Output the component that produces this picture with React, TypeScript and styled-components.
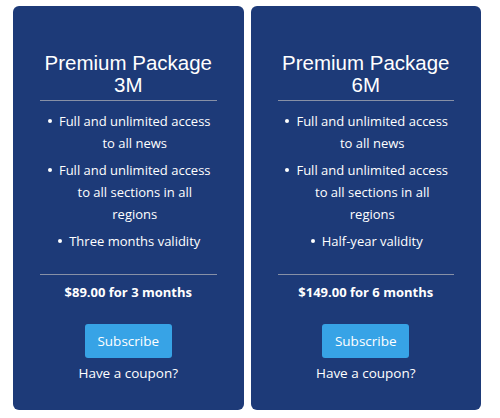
import styled, { createGlobalStyle } from 'styled-components';

const GlobalStyle = createGlobalStyle`
  html, body {
    margin: 0;
    padding: 0;
    background: #ffffff;
  }
  body {
    font-family: 'Open Sans', 'Liberation Sans', sans-serif;
  }
`;

const Page = styled.div`
  display: flex;
  gap: 7px;
  width: 468px;
  padding: 6px 0 0 13px;
`;

const Card = styled.div`
  flex: 1;
  display: flex;
  flex-direction: column;
  align-items: stretch;
  background: #1d3a78;
  border-radius: 6px;
  padding: 46px 27px 26px;
  color: #ffffff;
  height: 404px;
  box-sizing: border-box;
`;

const Title = styled.h3`
  margin: 0;
  font-family: 'Liberation Sans', Arial, sans-serif;
  font-weight: 400;
  font-size: 20.5px;
  line-height: 22px;
  text-align: center;
`;

const Divider = styled.hr<{ gap: number }>`
  margin: ${({ gap }) => gap}px 0 0;
  border: 0;
  height: 1px;
  background: #8790a6;
`;

const Features = styled.ul`
  list-style: none;
  margin: 9px 0 0;
  padding: 0 2px 0 15px;
  display: flex;
  flex-direction: column;
  gap: 5px;
`;

const Feature = styled.li`
  font-size: 13px;
  line-height: 22px;
  text-align: center;

  &::before {
    content: '';
    display: inline-block;
    width: 4px;
    height: 4px;
    border-radius: 50%;
    background: #ffffff;
    vertical-align: middle;
    margin: -2px 7px 0 -11px;
  }
`;

const Price = styled.div`
  margin-top: 6px;
  font-size: 13px;
  font-weight: 700;
  line-height: 22px;
  text-align: center;
`;

const SubscribeButton = styled.button`
  align-self: center;
  margin-top: 21px;
  width: 87px;
  height: 35px;
  border: 0;
  border-radius: 3px;
  background: #37a3e6;
  color: #ffffff;
  font-family: 'Open Sans', 'Liberation Sans', sans-serif;
  font-size: 13.5px;
  cursor: pointer;
`;

const Coupon = styled.a`
  margin-top: 4px;
  font-size: 13.5px;
  line-height: 22px;
  text-align: center;
  color: #ffffff;
  text-decoration: none;
`;

interface Plan {
  code: string;
  features: string[];
  price: string;
}

const plans: Plan[] = [
  {
    code: '3M',
    features: [
      'Full and unlimited access to all news',
      'Full and unlimited access to all sections in all regions',
      'Three months validity',
    ],
    price: '$89.00 for 3 months',
  },
  {
    code: '6M',
    features: [
      'Full and unlimited access to all news',
      'Full and unlimited access to all sections in all regions',
      'Half-year validity',
    ],
    price: '$149.00 for 6 months',
  },
];

export default function App() {
  return (
    <>
      <GlobalStyle />
      <Page>
        {plans.map((plan) => (
          <Card key={plan.code}>
            <Title>
              Premium Package
              <br />
              {plan.code}
            </Title>
            <Divider gap={4} />
            <Features>
              {plan.features.map((f) => (
                <Feature key={f}>{f}</Feature>
              ))}
            </Features>
            <Divider gap={22} />
            <Price>{plan.price}</Price>
            <SubscribeButton>Subscribe</SubscribeButton>
            <Coupon href="#">Have a coupon?</Coupon>
          </Card>
        ))}
      </Page>
    </>
  );
}
